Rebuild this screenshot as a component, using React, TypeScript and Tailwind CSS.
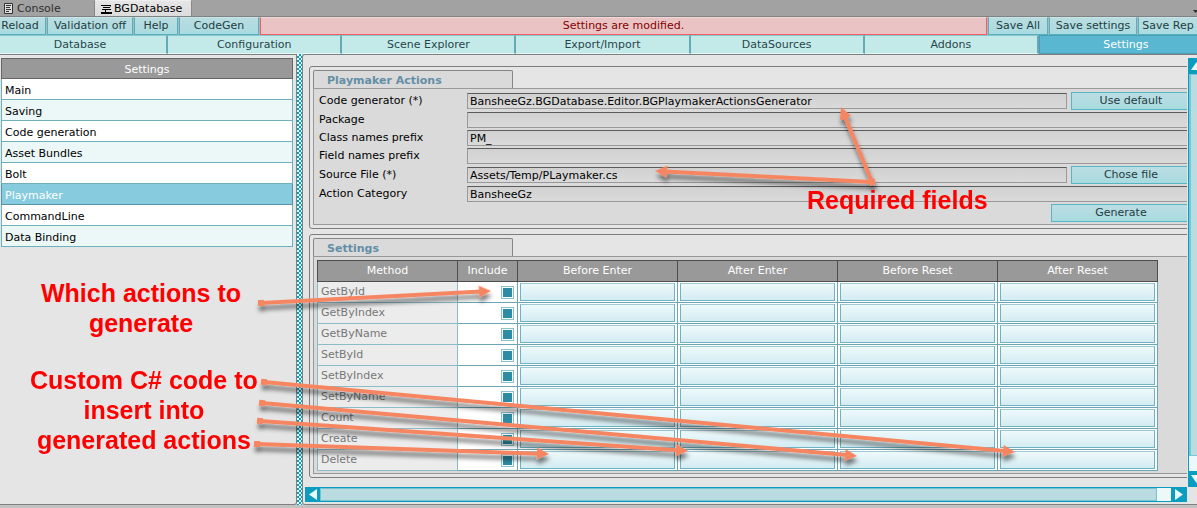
import React from "react";

const mainTabs = ["Database", "Configuration", "Scene Explorer", "Export/Import", "DataSources", "Addons", "Settings"];
const sections = ["Main", "Saving", "Code generation", "Asset Bundles", "Bolt", "Playmaker", "CommandLine", "Data Binding"];
const methods = ["GetById", "GetByIndex", "GetByName", "SetById", "SetByIndex", "SetByName", "Count", "Create", "Delete"];
const codeColumns = ["Before Enter", "After Enter", "Before Reset", "After Reset"];

type FieldDef = { id: string; label: string; value: string; button?: string; spaced?: boolean };
const fields: FieldDef[] = [
  { id: "generator", label: "Code generator (*)", value: "BansheeGz.BGDatabase.Editor.BGPlaymakerActionsGenerator", button: "Use default" },
  { id: "package", label: "Package", value: "", spaced: true },
  { id: "class-prefix", label: "Class names prefix", value: "PM_" },
  { id: "field-prefix", label: "Field names prefix", value: "" },
  { id: "source", label: "Source File (*)", value: "Assets/Temp/PLaymaker.cs", button: "Chose file", spaced: true },
  { id: "category", label: "Action Category", value: "BansheeGz", spaced: true },
];

function ToolButton({ className, children }: { className: string; children: React.ReactNode }) {
  return (
    <button
      type="button"
      className={`h-[18px] shrink-0 whitespace-nowrap border border-t-[#c4e6e8] border-x-[#55b0c2] border-b-[#55b0c2] bg-linear-to-b from-[#b9dde1] to-[#a9dbe0] text-center leading-4 text-[#243c42] ${className}`}
    >
      {children}
    </button>
  );
}

function ActionButton({ className, children }: { className: string; children: React.ReactNode }) {
  return (
    <button
      type="button"
      className={`h-[18px] shrink-0 border border-[#55b7c6] bg-linear-to-b from-[#bbdde2] to-[#a8dbe0] text-center leading-4 text-[#243c42] ${className}`}
    >
      {children}
    </button>
  );
}

function Group({ title, children }: { title: string; children: React.ReactNode }) {
  return (
    <section className="rounded-[3px] border border-[#7d7d7d] p-[3px]">
      <h2 className="flex h-[18px] w-[200px] items-center rounded-t-[2px] border border-b-0 border-[#858585] bg-[#dadada] pl-[13px] pt-[3px] font-bold leading-4 text-[#648ea6]">
        {title}
      </h2>
      <div className="border border-[#999] bg-[#dadada]">{children}</div>
    </section>
  );
}

function Field({ field }: { field: FieldDef }) {
  return (
    <div className={`flex h-[18px] items-center ${field.spaced ? "mt-px" : ""}`}>
      <label htmlFor={field.id} className="w-[148px] shrink-0 leading-4">
        {field.label}
      </label>
      <input
        id={field.id}
        type="text"
        defaultValue={field.value}
        className="h-4 min-w-0 flex-1 border border-[#999] border-t-[#5c5c5c] bg-linear-to-b from-[#d1d1d1] to-[#dadada] px-[2px] leading-[14px] outline-none"
      />
      {field.button && <ActionButton className="ml-1 w-[120px]">{field.button}</ActionButton>}
    </div>
  );
}

function MethodTable() {
  return (
    <table className="w-[840px] table-fixed border-collapse">
      <colgroup>
        <col className="w-[140px]" />
        <col className="w-[60px]" />
        <col className="w-[160px]" />
        <col className="w-[160px]" />
        <col className="w-[160px]" />
        <col className="w-[160px]" />
      </colgroup>
      <thead>
        <tr className="h-[21px] bg-[#999]">
          {["Method", "Include", ...codeColumns].map((name) => (
            <th key={name} scope="col" className="border border-[#4d4d4d] p-0 text-center font-normal leading-4 text-white">
              {name}
            </th>
          ))}
        </tr>
      </thead>
      <tbody>
        {methods.map((method) => (
          <tr key={method} className="h-[21px] bg-white">
            <th scope="row" className="border border-[#8bbcc8] bg-[#ececec] p-0 pl-[3px] text-left font-normal leading-4 text-[#777]">
              {method}
            </th>
            <td className="border border-[#6aa6b6] p-0">
              <input
                type="checkbox"
                defaultChecked
                aria-label={`Include ${method}`}
                className="mr-[3px] ml-auto block size-[13px] appearance-none border border-[#8dc0ce] bg-white p-px checked:bg-[#2d8ba3] checked:shadow-[inset_0_0_0_1px_#f4fcfd]"
              />
            </td>
            {codeColumns.map((column) => (
              <td key={column} className="border border-[#6aa6b6] px-[2px] py-px">
                <input
                  type="text"
                  aria-label={`${method} ${column}`}
                  className="block h-[18px] w-full border border-[#6fb3c3] border-t-[#9fc9d2] bg-linear-to-b from-[#eef9fb] to-[#d3ecf2] px-[2px] outline-none"
                />
              </td>
            ))}
          </tr>
        ))}
      </tbody>
    </table>
  );
}

type Arrow = { from: [number, number]; to: [number, number] };
const arrows: Arrow[] = [
  { from: [872, 182], to: [841, 107] },
  { from: [872, 182], to: [655, 171] },
  { from: [261, 303], to: [491, 291] },
  { from: [264, 382], to: [1015, 452] },
  { from: [262, 403], to: [857, 456] },
  { from: [260, 421], to: [688, 451] },
  { from: [257, 444], to: [549, 454] },
];

function ArrowLayer() {
  return (
    <svg width="1197" height="508" className="pointer-events-none absolute left-0 top-0" aria-hidden="true">
      <defs>
        <filter id="shadow" filterUnits="userSpaceOnUse" x="0" y="0" width="1197" height="508">
          <feDropShadow dx="1" dy="5" stdDeviation="2" floodColor="#000" floodOpacity="0.5" />
        </filter>
      </defs>
      <g fill="#f68662" stroke="none" filter="url(#shadow)">
        {arrows.map(({ from, to }) => {
          const length = Math.hypot(to[0] - from[0], to[1] - from[1]);
          const angle = (Math.atan2(to[1] - from[1], to[0] - from[0]) * 180) / Math.PI;
          return (
            <g key={`${to[0]}-${to[1]}`} transform={`translate(${from[0]} ${from[1]}) rotate(${angle})`}>
              <rect x="-3" y="-3" width="6" height="6" />
              <rect x="0" y="-2" width={length - 10} height="4" />
              <path d={`M${length} 0 L${length - 12} -6 V6 Z`} />
            </g>
          );
        })}
      </g>
    </svg>
  );
}

function Note({ className, children }: { className: string; children: React.ReactNode }) {
  return (
    <p className={`pointer-events-none absolute whitespace-nowrap text-center font-['Liberation_Sans',Arial,sans-serif] text-[25px] font-bold leading-[30px] text-[#fe0000] ${className}`}>
      {children}
    </p>
  );
}

export default function App() {
  return (
    <div className="relative flex min-h-screen flex-col overflow-hidden bg-[#c2c2c2] pb-[3px] font-['DejaVu_Sans',Verdana,sans-serif] text-[11px] text-black">
      <header className="flex h-[17px] items-end border-b border-[#828282] bg-[#a2a2a2]">
        <button type="button" className="flex h-4 w-[94px] items-center gap-1 pt-px pl-1 leading-4 text-[#2e2e2e]">
          <svg width="9" height="11" viewBox="0 0 9 11" fill="none" stroke="#333" aria-hidden="true">
            <path d="M.5 .5H8.5V10.5H.5Z" fill="#ddd" />
            <path d="M2 2.5H7M2 4.5H6M2 6.5H7M2 8.5H5" />
          </svg>
          Console
        </button>
        <button type="button" className="flex h-4 w-[98px] items-center gap-[2px] rounded-t-[2px] border border-b-0 border-[#888] border-t-[#eee] bg-linear-to-b from-[#e6e6e6] to-[#dcdcdc] pt-px pl-1.5 leading-4">
          <svg width="11" height="9" viewBox="0 0 11 9" fill="none" stroke="#000" aria-hidden="true">
            <path d="M0 .5H10M2 2.5H9M1 4.5H10M0 7.5H11M0 8.5H11M4.5 4V8M9.5 0V1.5" />
          </svg>
          BGDatabase
        </button>
        <svg width="5" height="3" viewBox="0 0 5 3" className="-mr-px mb-[3px] ml-auto" aria-hidden="true">
          <path d="M0 0H5L2.5 3Z" fill="#333" />
        </svg>
      </header>

      <div className="flex h-[18px] gap-px overflow-hidden bg-[#b4b4b4]">
        <ToolButton className="-ml-[6px] w-[52px]">Reload</ToolButton>
        <ToolButton className="w-[86px]">Validation off</ToolButton>
        <ToolButton className="w-[44px]">Help</ToolButton>
        <ToolButton className="w-[80px]">CodeGen</ToolButton>
        <div role="status" className="min-w-0 flex-1 border border-t-[#f3d8d8] border-[#ee5f5f] bg-[#eac4c4] text-center leading-4 text-[#850000]">
          Settings are modified.
        </div>
        <ToolButton className="w-[60px]">Save All</ToolButton>
        <ToolButton className="w-[88px]">Save settings</ToolButton>
        <ToolButton className="-mr-px w-[60px]">Save Rep</ToolButton>
      </div>

      <nav className="-mr-[15px] -ml-[6px] flex h-[19px]">
        {mainTabs.map((tab) => (
          <button
            type="button"
            key={tab}
            className={
              tab === "Settings"
                ? "flex-1 border-y border-l border-t-[#4b9db5] border-b-[#4b9db5] border-l-[#4b9db5] bg-[#5ab7d1] leading-4 text-white"
                : "flex-1 border-r-2 border-t border-b border-t-[#8cc6cd] border-r-[#68a9b7] border-b-[#dff7f7] bg-[#c3eae9] leading-4 text-[#28464a]"
            }
          >
            {tab}
          </button>
        ))}
      </nav>

      <div className="flex flex-1">
        <aside className="w-[297px] shrink-0 rounded-br-[3px] border border-l-0 border-[#808080] bg-[#e5e5e5] pt-[3px] pr-[3px] pl-px">
          <div className="h-[21px] border border-[#666] bg-[#999] text-center leading-[21px] text-white">Settings</div>
          <ul>
            {sections.map((section, index) => (
              <li
                key={section}
                className={`h-[21px] border-x border-b ${
                  section === "Playmaker"
                    ? "border-[#5795a6] bg-[#87ccde] text-white"
                    : index % 2
                      ? "border-[#6fb0bf] bg-[#ecf8f8]"
                      : "border-[#6fb0bf] bg-white"
                }`}
              >
                <button type="button" className="block h-5 w-full pt-px pl-[3px] text-left leading-[21px]">
                  {section}
                </button>
              </li>
            ))}
          </ul>
        </aside>

        <div className="w-[5px] shrink-0 bg-[#e4fbfb] bg-[conic-gradient(#0b9dbd_25%,transparent_0_50%,#0b9dbd_0_75%,transparent_0)] bg-size-[4px_4px]" />

        <main className="-mr-[7px] flex min-w-0 flex-1 rounded-l-[3px] border border-[#808080] bg-[#e5e5e5] pt-[3px] pb-[2px] pl-[2px]">
          <div className="flex min-w-0 flex-1 flex-col">
            <div className="flex-1 overflow-hidden pt-2 pl-1">
              <div className="-mr-[13px] flex flex-col gap-[5px]">
                <Group title="Playmaker Actions">
                  <form className="flex flex-col pt-[3px] pr-1 pb-[2px] pl-[5px]">
                    {fields.map((field) => (
                      <Field key={field.id} field={field} />
                    ))}
                    <ActionButton className="mt-px w-[140px] self-end">Generate</ActionButton>
                  </form>
                </Group>
                <Group title="Settings">
                  <div className="px-[3px] pt-[3px] pb-[2px]">
                    <MethodTable />
                  </div>
                </Group>
              </div>
            </div>

            <div className="mt-2 flex h-[15px] border-y border-[#0b9dc0] bg-[#edf9f9]">
              <button type="button" aria-label="Scroll left" className="flex w-[15px] items-center justify-center bg-[#0b9dc0]">
                <svg width="8" height="11" viewBox="0 0 8 11" aria-hidden="true">
                  <path d="M8 0V11L0 5.5Z" fill="#e9fafa" />
                </svg>
              </button>
              <div className="mr-[14px] flex-1 border border-[#74c3cf] bg-[#badce0]" />
              <button type="button" aria-label="Scroll right" className="flex w-4 items-center justify-center bg-[#0b9dc0]">
                <svg width="8" height="11" viewBox="0 0 8 11" aria-hidden="true">
                  <path d="M0 0V11L8 5.5Z" fill="#e9fafa" />
                </svg>
              </button>
            </div>
          </div>

          <div className="mb-[15px] ml-px flex w-[15px] shrink-0 flex-col border-l border-[#0b9dc0] bg-[#edf9f9]">
            <button type="button" aria-label="Scroll up" className="flex h-4 items-center justify-center bg-[#0b9dc0]">
              <svg width="11" height="8" viewBox="0 0 11 8" aria-hidden="true">
                <path d="M0 8H11L5.5 0Z" fill="#e9fafa" />
              </svg>
            </button>
            <div className="mb-[15px] flex-1 border border-l-2 border-[#74c9d8] bg-[#badce0]" />
            <button type="button" aria-label="Scroll down" className="flex h-4 items-center justify-center bg-[#0b9dc0]">
              <svg width="11" height="8" viewBox="0 0 11 8" aria-hidden="true">
                <path d="M0 0H11L5.5 8Z" fill="#e9fafa" />
              </svg>
            </button>
          </div>
        </main>
      </div>

      <ArrowLayer />
      <Note className="left-[807px] top-[185px]">Required fields</Note>
      <Note className="left-[41px] top-[278px]">
        Which actions to
        <br />
        generate
      </Note>
      <Note className="left-[30px] top-[365px]">
        Custom C# code to
        <br />
        insert into
        <br />
        generated actions
      </Note>
    </div>
  );
}
